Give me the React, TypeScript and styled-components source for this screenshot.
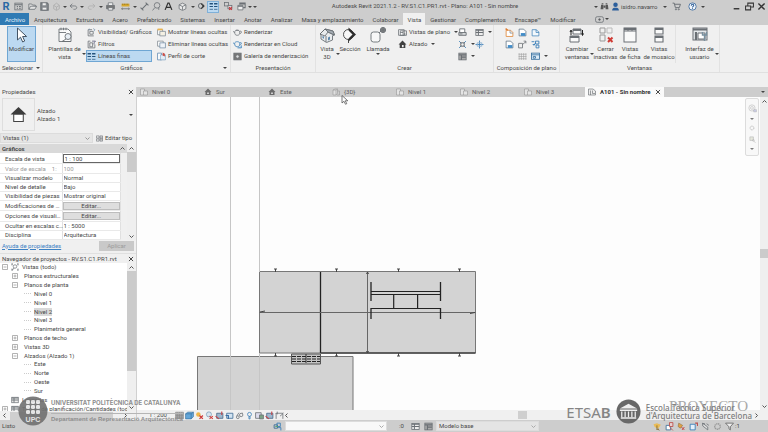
import React from "react";
import styled, { createGlobalStyle, css } from "styled-components";

const c = {
  ink: "#484848",
  bar: "#cdcdcd",
  panel: "#f0f0f0",
  blue: "#2f7ab4",
  pick: "#bcd9f1",
  pickLine: "#6fa6d3",
};

const Global = createGlobalStyle`
  * { box-sizing: border-box; }
  html, body, #root { height: 100%; }
  body { margin: 0; overflow: hidden; background: ${c.panel}; color: ${c.ink};
    font: 6px/8px Roboto, "Open Sans", sans-serif; }
  button, input, select { font: inherit; color: inherit; border: 0; padding: 0; margin: 0; background: none; border-radius: 0; appearance: none; outline: 0; }
  ul { list-style: none; margin: 0; padding: 0; }
`;

/* ---------- icons, drawn on a 16-unit grid ---------- */

const S = { fill: "none", stroke: "#6a6f74", strokeWidth: 1.4 } as const;
const B = { fill: "none", stroke: "#3c7fb8", strokeWidth: 1.6 } as const;

const icons: Record<string, React.ReactNode> = {
  window: <g {...S}><rect x="1.5" y="2" width="13" height="12" /><path d="M1.500 5h13M5 8h2M9 8h3M5 11h2M9 11h3" strokeWidth="1.800" /></g>,
  folder: <g {...S}><path d="M1.500 13V3.500h5l1.500 2h5V8M1.500 13l3-5.500h11l-3.500 5.500z" fill="#e3e3e3" /></g>,
  save: <g {...S} strokeWidth="2"><path d="M1.500 1.500h11l2 2v11h-13z" fill="#8b8f93" /><path d="M4 1.500h7v5H4zM4 14V9.500h8V14z" fill="#eee" strokeWidth="1" /></g>,
  sync: <g {...S} stroke="#aaa"><path d="M3 6l5-4 5 4v6l-5 3-5-3zM3 6l5 3 5-3M8 9v5" /></g>,
  undo: <g {...S}><path d="M6 3L2 7l4 4M2 7h8c5 0 5 6 0 6H8" /></g>,
  redo: <g {...S} stroke="#adadad"><path d="M10 3l4 4-4 4M14 7H6c-5 0-5 6 0 6h2" /></g>,
  print: <g {...S}><path d="M4 6V1.500h8V6" fill="#fff" /><path d="M1 6h14v6H1z" fill="#777" /><path d="M4 10h8v4.500H4z" fill="#eee" /></g>,
  measure: <g><path d="M1 3h14v5H1z" fill="#d8a92c" /><path d="M3 3v2M6 3v2M9 3v2M12 3v2" stroke="#6b5620" /><path d="M1 12h14M3 10.500L1 12l2 1.500M13 10.500l2 1.500-2 1.500" {...S} /></g>,
  dim: <g {...S} strokeWidth="1.800"><path d="M3 13L13 3M1 10l5 5M10 1l5 5" /></g>,
  cropSize: <g {...S}><path d="M2 14V4h12v10M2 4l-1 1M14 4l1-1M9 9l5-4M4 1v5" /></g>,
  tag: <g {...S}><circle cx="9" cy="6" r="5" /><path d="M5 10l-4 5M12 10v4" /></g>,
  letter: <path d="M2 14L7 2h2l5 12M4.500 9.500h7" fill="none" stroke="#333" strokeWidth="2.200" />,
  cube: <g {...S}><path d="M2 5l6-3 6 3v7l-6 3-6-3z" fill="#e8e8e8" /><path d="M2 5l6 3 6-3M8 8v6" /></g>,
  cubeTab: <g {...S} stroke="#999" strokeWidth="1.200"><path d="M2 4l4-2h5v9l-4 3H2zM2 4h6v10M8 4l3-2" fill="#e0e0e0" /><path d="M11 6h4v8h-5" /></g>,
  section: <g {...S} strokeWidth="1.700"><circle cx="7" cy="7" r="4.500" /><path d="M7 2l7 5-7 6V11l3-4-3-3z" fill="#333" stroke="none" /></g>,
  thin: <g stroke="#24527b"><path d="M1 3h6M9 3h6" strokeWidth="2.500" /><path d="M1 8h6M9 8h6" strokeWidth="2" /><path d="M1 13h6M9 13h6" strokeWidth="1.300" /></g>,
  closeViews: <g {...S}><rect x="1" y="1" width="7" height="6" /><rect x="7" y="6" width="7" height="6" fill="#ddd" /><path d="M9 9l5 5M14 9l-5 5" stroke="#c8373c" strokeWidth="2" /></g>,
  windows: <g {...S}><path d="M1.500 6h9v8h-9z" fill="#eee" /><path d="M1.500 7.500h9M5 5V2h9.500v8H11M5 3.500h9" strokeWidth="1.800" /></g>,
  binoc: <g fill="#555"><path d="M2 5h4v8H1zM10 5h4l1 8h-5zM6.500 6h3v4h-3zM3 2h3v2H3zM10 2h3v2h-3z" /></g>,
  user: <g fill="#2c5f9c"><circle cx="8" cy="5" r="4" /><path d="M2 15c0-4 2-5 6-5s6 1 6 5z" /></g>,
  cart: <g {...S} strokeWidth="1.700"><path d="M1 2h3l2 8h7l2-6H5" /><circle cx="7" cy="13" r="1" /><circle cx="12" cy="13" r="1" /></g>,
  help: <g><circle cx="8" cy="8" r="6.500" fill="#f1f6fb" stroke="#3e6b9c" strokeWidth="1.500" /><path d="M5.800 6.500c0-3.200 4.600-3 4.400-.3C10 8 8 8 8 9.800M8 11v2" fill="none" stroke="#2c5c96" strokeWidth="1.800" /></g>,
  min: <path d="M3 12h10" stroke="#333" strokeWidth="2.500" />,
  restore: <g fill="none" stroke="#333" strokeWidth="1.800"><path d="M1 7h9v7H1zM5 6V2h10v7h-4" /></g>,
  close: <path d="M2.500 2.500l11 11M13.500 2.500l-11 11" stroke="#333" strokeWidth="2.400" />,
  play: <g {...S}><rect x="1" y="3" width="14" height="10" rx="3" /><circle cx="8" cy="8" r="1.500" fill="#555" /></g>,
  arrow: <path d="M3.500 1v12l3-2.800 2.200 4.800 2-1-2.100-4.500h4z" fill="#fff" stroke="#456" strokeWidth="1" />,
  template: <g {...S} strokeWidth=".9"><path d="M2 2h9l3 3v9.500H2z" fill="#fafafa" /><path d="M4 .7v2.500M6.500.7v2.500M9 .7v2.500M2 5.500h7" /><circle cx="11" cy="9.500" r="3" fill="#e8eef4" /><path d="M9 12l-4 2.500h9" /></g>,
  visib: <g {...S}><path d="M2 3h7M2 3v11h10M5 6h6v5H5z" /><path d="M11 1l3 2-2 3M4 1v3" stroke="#7d98b0" /></g>,
  filter: <g {...S}><path d="M2 2v12h12V8M5 5h5v7H5zM2 2h4" /><path d="M9 2h6l-2.500 3v3" stroke="#557" /></g>,
  show: <g><path d="M1 3h9v9H1z" fill="#fff" stroke="#8b9298" strokeWidth="1.500" /><path d="M5 6h10v8H5z" fill="#f4f0e3" stroke="#7b8894" strokeWidth="1.300" /><path d="M1 1h9v3H1z" fill="#e9b24d" /></g>,
  hide: <g><path d="M1 2h10v9H1z" fill="#fff" stroke="#8b9298" strokeWidth="1.500" /><path d="M5 5h10v9H5z" fill="#eef3f8" stroke="#708ba3" strokeWidth="1.300" /></g>,
  cut: <g><path d="M1 2h7v12H1z" fill="#fff" stroke="#6890b6" strokeWidth="1.500" /><path d="M6 5h9v9H6z" fill="#e3edf6" stroke="#6890b6" /><path d="M10 1l4 2v5l-4-2z" fill="#cc4d45" /></g>,
  teapot: <g {...S} strokeWidth="1.300"><path d="M3 7c0-4 9-4 9 0s-1 6-4.500 6S3 11 3 7zM3 8L0 6M12 6c4-2 4 4 0 4M5 4h5" fill="#eee" /></g>,
  cloud: <g {...B} strokeWidth="1.400"><path d="M3 6c0-4 9-4 9 0s-1 6-4.500 6S3 10 3 6zM3 7L0 5M12 5c4-2 4 3 0 4" /><path d="M8 14h6a2 2 0 000-4" fill="#a9cce8" /></g>,
  gallery: <g {...S}><rect x="1.500" y="2" width="13" height="12" fill="#777" /><circle cx="8" cy="8" r="3" fill="#ddd" /></g>,
  house3d: <g {...S} strokeWidth=".9"><path d="M1 7l5-5 8 2 1.500 4-2 .7V13l-6 2.500L2 12V8z" fill="#e9ecee" /><path d="M6 2L1 7l5 2 3-4 6 3M7 9v6" /><path d="M6 2l8 2 1.500 4-6.500-3z" fill="#a5adb4" /><path d="M9 10.500v3l2-1v-3zM3.500 9v2l1.500.7V9.600z" fill="#5d88ad" stroke="none" /></g>,
  bigSection: <g><circle cx="6.500" cy="7.500" r="5" fill="#f8f8f8" stroke="#3e3e3e" strokeWidth=".9" /><path d="M6.500.5l7.500 7-7.500 7v-3l4-4-4-4z" fill="#2e2e2e" /><path d="M6.500 12v4" stroke="#333" strokeWidth=".9" /></g>,
  callout: <g {...S} strokeWidth=".9"><rect x="1" y="5" width="9" height="10" rx="2.500" fill="#f8f8f8" /><circle cx="13" cy="3" r="2.600" fill="#888" /><path d="M9 6l2-2M10.500 3h5M13 .5v5" /></g>,
  plan: <g {...S}><path d="M1 3h10v10H1z" fill="#fff" /><path d="M4 5h11v8H4zM4 8h5v5M9 5v3M12 9v4" /></g>,
  house: <path d="M8 1L1 8h2v6h10V8h2zM7 9h3v4H7z" fill="#404040" fillRule="evenodd" />,
  houseTab: <path d="M8 1L1 8h2v6h10V8h2zM6 9h4v3H6z" fill="#6a6a6a" fillRule="evenodd" />,
  draft: <g {...S} strokeWidth="1.600"><path d="M3 8V1.500h9V8" fill="#fff" /><path d="M1.500 8h13v5h-13z" fill="#d5d8da" /><path d="M3 10.500h5" /></g>,
  schedule: <g {...S}><rect x="1.500" y="2.500" width="13" height="11" fill="#eee" /><path d="M1.500 4h13M6 4v9M1.500 8h13" strokeWidth="1.800" /></g>,
  dup: <g {...B}><path d="M2 2l4 4M14 2l-4 4M2 14l4-4M14 14l-4-4" /><rect x="5" y="5" width="6" height="6" stroke="#666" /></g>,
  scope: <g {...B}><path d="M8 1v14M1 8h14" /><path d="M4 5h8v6H4z" stroke="#8eb3d2" /></g>,
  legend: <g {...S}><rect x="1.500" y="2" width="13" height="12" fill="#aaa" /><path d="M1.500 5h13M6 5v9M6 9h8" strokeWidth="2" /></g>,
  sheet: <g {...B} strokeWidth="1.500"><path d="M2 4h8l4 4v7H2z" fill="#fff" stroke="#e08a3c" /><path d="M9 4v5h5" stroke="#8a8f94" /><path d="M1 1l4 3" stroke="#dc7b31" strokeWidth="2.500" /></g>,
  sheetBlue: <g><path d="M2 2h8l4 4v8H2z" fill="#fff" stroke="#566b7e" strokeWidth="1.300" /><path d="M5 9h8v5H5z" fill="#438dc9" /></g>,
  sheetTop: <g {...B} strokeWidth="1.300"><path d="M2 3h7l5 4v7H2z" fill="#f3f8fc" /><path d="M9 3v5h5" /></g>,
  revision: <g {...S}><path d="M1 6h7v8H1zM8 8l6-5M10 2h4v4" /></g>,
  guide: <g {...B}><path d="M1 3h5M8 2h6v5H8zM3 8h4M9 9h5v5H9zM8 5l-3 5" /></g>,
  grid: <path d="M2 2v12M6 2v12M10 2v12M14 2v12M1 4h14M1 8h14M1 12h14" stroke="#999" fill="none" />,
  viewport: <g><rect x="1" y="2" width="14" height="11" fill="#dcebf7" stroke="#39719f" strokeWidth="1.500" /><path d="M1 5h14M4 8h4v3H4z" stroke="#39719f" strokeWidth="1.500" fill="none" /></g>,
  swap: <g {...S} strokeWidth="1"><path d="M4 2h8v5H4zM1 9h9v6H1z" fill="#fafafa" /><path d="M4 3h8M1 10h9" strokeWidth="2" /><path d="M13.500 3v5M12.500 6.500l1 2 1-2M2 8V4M1 5l1-2 1 2" stroke="#222" /></g>,
  inactive: <g {...S} strokeWidth="1" stroke="#999"><path d="M2 1h5v5H2zM2 8h5v6H2z" /><path d="M9 1h5v5H9z" stroke="#bbb" /><path d="M10 10.500l4.500 4.500M14.500 10.500L10 15" stroke="#cf3a34" strokeWidth="2" /></g>,
  tabView: <g {...S} strokeWidth="1"><rect x="2" y="1" width="12" height="14" fill="#fafafa" /><path d="M2 2h12" strokeWidth="2.200" /><path d="M6 1v3M10 1v3M2 4h12" /></g>,
  tile: <g {...S} strokeWidth="1.100"><path d="M4 1h8v6H4zM4 9h8v6H4z" fill="#fafafa" /><path d="M4 2h8M4 10h8" strokeWidth="2" /></g>,
  interface: <g {...S} strokeWidth="1"><rect x="1" y="1" width="14" height="12" fill="#e6eaed" /><path d="M1 2.500h14M4 5v8" strokeWidth="2.200" /><path d="M6 6h7v6H6z" fill="#fff" /><path d="M12.500 7v7M10.500 5v3h4V5" stroke="#78909f" strokeWidth="1.400" /></g>,
  doc: <g {...S} stroke="#8a8a8a" strokeWidth="1"><path d="M1 2h8v4h6v8H1z" fill="#e4e4e4" /><path d="M7 6v8M9 6H7" /></g>,
  sheetTab: <g {...S} strokeWidth="1.300"><path d="M1 2h9l5 4v8H1z" fill="#eee" /><path d="M5 5v9M9 5v6h5" /></g>,
  views: <g {...S}><path d="M2 5V1M2 11v4M14 5V1M14 11v4M1 2h3M12 2h3M1 14h3M12 14h3" /><circle cx="8" cy="7" r="3.500" /><path d="M6 10l-3 4" /></g>,
  editType: <g {...S}><path d="M1 2h6v5H1zM1 9h6v5H1zM9 2h6v12H9zM9 5h6M9 8h6M9 11h6" /></g>,
  fine: <path d="M1 2h14v12H1zM1 5h14M1 8h14M1 11h14M4 2v12M8 2v12M12 2v12" fill="#aaa" stroke="#888" />,
  solid: <g stroke="#2d6596"><path d="M1 5l4-3h10v8l-4 4H1z" fill="#63a6d9" /><path d="M1 5h10v9M11 5l4-3" fill="none" /></g>,
  sun: <g><circle cx="6" cy="6" r="4" fill="#eeb64a" /><path d="M8 8l6 6M14 8l-6 6" stroke="#cf3d3a" strokeWidth="2.200" /></g>,
  shadow: <g><circle cx="7" cy="6" r="4.500" fill="#d8e4ee" stroke="#5c86a8" /><path d="M8 9l6 5M14 9l-6 5" stroke="#cf3d3a" strokeWidth="1.800" /></g>,
  crop: <g><path d="M3 4h11v9H3z" fill="#9fb8cf" stroke="#4c6b89" strokeWidth="1.500" /><path d="M1 9l6 5M12 1v6" stroke="#c8484a" strokeWidth="2" /></g>,
  cropShow: <g><path d="M3 4h11v9H3z" fill="#d3e4f2" stroke="#47729a" strokeWidth="1.500" /><path d="M1 8h5v6" fill="none" stroke="#3a6ea5" strokeWidth="2" /></g>,
  glasses: <g {...S}><circle cx="5" cy="11" r="2.500" /><circle cx="11" cy="7" r="3" /><path d="M3 9l4-6M13 5V3" /></g>,
  bulb: <g {...B} strokeWidth="1.400"><circle cx="8" cy="6" r="3.500" /><path d="M7 10h2v4H7z" /></g>,
  reveal: <g {...S}><path d="M1 3h10v10H1z" fill="#dde" /><path d="M8 7h7v7H8z" fill="#7ba386" /></g>,
  select: <g {...B}><path d="M2 5h6v6H2z" stroke="#3d6d94" /><path d="M7 2h6v6H7zM9 10h5v5" /><path d="M4 8h5" stroke="#56a56a" /></g>,
  pickOrange: <g><path d="M1 4l6-2 7 3-5 7-6-3z" fill="#e9bb57" /><path d="M7 6v8l2-2 2 3" fill="none" stroke="#80642a" strokeWidth="1.500" /></g>,
  pickRed: <g><path d="M2 6h8v8H2z" fill="#fff" stroke="#44749c" strokeWidth="1.600" /><path d="M8 1h6v7H8zM9 10l5 5" fill="#e6d0d0" stroke="#bb4c48" strokeWidth="1.500" /></g>,
  pin: <g><path d="M3 2l7 4-4 5-4-3z" fill="#e0a144" stroke="#8b6b3a" /><path d="M8 9l5 5M13 9l-4 5" stroke="#c2403d" strokeWidth="1.700" /></g>,
  face: <g><path d="M2 4h9v10H2z" fill="#e4f0fa" stroke="#3c7fb8" strokeWidth="1.600" /><path d="M11 2h4v5" fill="none" stroke="#bb4c48" strokeWidth="1.800" /></g>,
  drag: <g {...S}><path d="M2 3h5M3 2v5l9 7v-5zM10 3l4 3" fill="#ddd" /></g>,
  gear: <g {...S} stroke="#999"><circle cx="8" cy="8" r="5" strokeWidth="2.500" strokeDasharray="2.400 1" /></g>,
  funnel: <path d="M1 2h14L9.500 8.500V14L7 12V8.500z" fill="#eee" stroke="#555" strokeWidth="1.300" />,
  wheel: <g {...S} stroke="#999" strokeWidth="1"><circle cx="7" cy="7" r="5.500" /><circle cx="7" cy="7" r="2.500" /><path d="M10 10h5v4h-5z" fill="#b5b9e0" /></g>,
  zoomer: <g {...S} stroke="#999"><path d="M2 2h8v8H2z" fill="#dde0d0" /><circle cx="10" cy="10" r="2" /><path d="M11 12l4 3" /></g>,
};

const IconSvg = styled.svg<{ $s: number }>`
  width: ${(p) => p.$s}px;
  height: ${(p) => p.$s}px;
  flex: none;
  display: block;
`;
const Icon = ({ n, s = 9 }: { n: string; s?: number }) => (
  <IconSvg $s={s} viewBox="0 0 16 16" aria-hidden="true">{icons[n]}</IconSvg>
);

const Caret = styled.i`
  flex: none;
  width: 0;
  height: 0;
  border: 2px solid transparent;
  border-top-color: #444;
  border-bottom-width: 0;
`;

const ChevronSvg = styled.svg`
  width: 5px;
  height: 5px;
  flex: none;
  display: block;
`;
const Chevron = ({ d = "down", ink = "#555" }: { d?: string; ink?: string }) => (
  <ChevronSvg viewBox="0 0 10 10" aria-hidden="true">
    <path
      d={{ down: "M1 3l4 4 4-4", up: "M1 7l4-4 4 4", left: "M7 1L3 5l4 4", right: "M3 1l4 4-4 4" }[d]}
      fill="none" stroke={ink} strokeWidth="2"
    />
  </ChevronSvg>
);

/* ---------- shell ---------- */

const Shell = styled.div`
  position: relative;
  display: flex;
  flex-direction: column;
  height: 100vh;
  min-height: 0;
`;

const TitleBar = styled.header`
  display: flex;
  align-items: center;
  height: 13px;
  flex: none;
  background: ${c.bar};
`;
const Tool = styled.button<{ $w: number; $on?: boolean }>`
  width: ${(p) => p.$w}px;
  height: 12px;
  flex: none;
  display: flex;
  align-items: center;
  justify-content: center;
  ${(p) => p.$on && css`background: ${c.pick}; box-shadow: inset 0 0 0 1px #7fb0d8;`}
`;
const Logo = styled.span`
  width: 12px;
  flex: none;
  text-align: center;
  font-size: 11px;
  line-height: 12px;
  font-weight: 700;
  color: #2a6aa5;
`;
const Gap = styled.span<{ $w: number }>`
  width: ${(p) => p.$w}px;
  flex: none;
`;
const DocTitle = styled.span`
  flex: 1;
  min-width: 0;
  height: 10px;
  text-align: center;
  white-space: nowrap;
`;
const UserName = styled.span`
  width: 40px;
  flex: none;
  white-space: nowrap;
`;

const RibbonTabs = styled.nav`
  display: flex;
  height: 12px;
  flex: none;
  background: ${c.bar};
`;
const RibbonTab = styled.button<{ $kind?: "file" | "on" }>`
  height: 12px;
  padding: 1px 4px 0 5px;
  white-space: nowrap;
  line-height: 10px;
  ${(p) => p.$kind === "file" && css`background: ${c.blue}; color: #e8f2fa;`}
  ${(p) => p.$kind === "on" && css`background: ${c.panel};`}
`;

const Ribbon = styled.section`
  display: flex;
  height: 48px;
  flex: none;
  background: ${c.panel};
  border-bottom: 1px solid #e0e0e0;
`;
const Group = styled.div<{ $w: number }>`
  width: ${(p) => p.$w}px;
  flex: none;
  display: flex;
  flex-direction: column;
  border-right: 1px solid #e2e2e2;
`;
const GroupBody = styled.div<{ $pad?: number }>`
  display: flex;
  height: 38px;
  padding-left: ${(p) => p.$pad ?? 0}px;
`;
const GroupTitle = styled.div`
  display: flex;
  align-items: center;
  justify-content: center;
  gap: 3px;
  height: 9px;
  white-space: nowrap;
`;
const Launcher = styled.button`
  margin-left: auto;
  margin-right: 3px;
  display: flex;
`;
const GroupName = styled.span`
  flex: 1;
  text-align: center;
`;
const Divider = styled.span`
  width: 1px;
  margin-right: 8px;
  background: #e2e2e2;
`;
const BigButton = styled.button<{ $w: number; $on?: boolean }>`
  width: ${(p) => p.$w}px;
  height: 36px;
  margin-top: 1px;
  flex: none;
  display: flex;
  flex-direction: column;
  align-items: center;
  padding-top: 1px;
  line-height: 8px;
  white-space: nowrap;
  ${(p) => p.$on && css`background: ${c.pick}; box-shadow: inset 0 0 0 1px ${c.pickLine};`}
`;
const BigLabel = styled.span`
  margin-top: 2px;
  white-space: pre;
  text-align: center;
`;
const CaretSlot = styled.span`
  display: flex;
  width: 4px;
  flex: none;
  padding-top: 28px;
`;
const Column = styled.div<{ $w: number }>`
  width: ${(p) => p.$w}px;
  flex: none;
  display: grid;
  grid-template-rows: repeat(3, 12px);
  padding-top: 1px;
`;
const SmallButton = styled.button<{ $on?: boolean }>`
  display: flex;
  align-items: center;
  gap: 2px;
  white-space: nowrap;
  padding-left: 1px;
  ${(p) => p.$on && css`background: ${c.pick}; box-shadow: inset 0 0 0 1px ${c.pickLine};`}
`;
const DropCaret = styled(Caret)`
  margin-left: 2px;
`;

/* ---------- work area ---------- */

const Work = styled.main`
  flex: 1;
  min-height: 0;
  display: flex;
  margin-top: 14px;
`;
const Side = styled.aside`
  width: 137px;
  flex: none;
  display: flex;
  flex-direction: column;
  border-right: 1px solid #d0d0d0;
  overflow: hidden;
`;
const PaneHead = styled.div`
  display: flex;
  align-items: center;
  justify-content: space-between;
  height: 10px;
  flex: none;
  padding: 0 2px;
  white-space: nowrap;
`;
const IconButton = styled.button`
  display: flex;
  flex: none;
`;
const TypePicker = styled.button`
  display: flex;
  align-items: center;
  height: 35px;
  flex: none;
  gap: 2px;
  text-align: left;
  padding: 0 3px 0 2px;
`;
const TypeThumb = styled.span`
  width: 33px;
  height: 33px;
  display: flex;
  align-items: center;
  justify-content: center;
  border: 1px solid #dedede;
`;
const TypeName = styled.span`
  flex: 1;
  white-space: pre;
`;
const InstanceRow = styled.div`
  display: flex;
  align-items: center;
  height: 12px;
  flex: none;
  gap: 3px;
`;
const Combo = styled.label<{ $w: number; $bg: string }>`
  width: ${(p) => p.$w}px;
  height: 10px;
  flex: none;
  display: flex;
  align-items: center;
  padding: 0 2px;
  background: ${(p) => p.$bg};
  border: 1px solid #dcdcdc;
`;
const ComboSelect = styled.select`
  flex: 1;
  min-width: 0;
  height: 8px;
  line-height: 8px;
`;
const EditType = styled.button`
  display: flex;
  align-items: center;
  gap: 2px;
  white-space: nowrap;
`;
const PropsBody = styled.div`
  display: flex;
  height: 96px;
  flex: none;
`;
const PropsMain = styled.div`
  flex: 1;
  min-width: 0;
`;
const Category = styled.div`
  display: flex;
  align-items: center;
  justify-content: space-between;
  height: 9px;
  padding: 0 2px;
  background: #d9d9d9;
`;
const PropTable = styled.table`
  width: 121px;
  height: 87px;
  table-layout: fixed;
  border-collapse: collapse;
  background: #fff;
  th, td { padding: 0; border: 0; border-right: 1px solid #e0e0e0; border-bottom: 1px solid #e9e9e9; line-height: 7px; }
  th { width: 62px; padding-left: 5px; font-weight: 400; text-align: left; white-space: nowrap; }
`;
const PropInput = styled.input<{ $focus?: boolean; $dim?: boolean }>`
  display: block;
  width: 100%;
  height: ${(p) => (p.$focus ? 9 : 7)}px;
  padding-left: 1px;
  ${(p) => p.$dim && css`color: #999;`}
  ${(p) => p.$focus && css`box-shadow: inset 0 0 0 1px #666; padding-left: 2px;`}
`;
const PropLabel = styled.label<{ $dim?: boolean }>`
  white-space: pre;
  ${(p) => p.$dim && css`color: #999;`}
`;
const PropButton = styled.button`
  display: block;
  width: 100%;
  height: 8px;
  line-height: 7px;
  background: #dedede;
  box-shadow: inset 0 0 0 1px #bdbdbd;
`;
const VScroll = styled.div<{ $w: number }>`
  width: ${(p) => p.$w}px;
  flex: none;
  display: flex;
  flex-direction: column;
  align-items: center;
  background: #efefef;
`;
const VThumb = styled.span<{ $h: number; $top?: number }>`
  width: 100%;
  height: ${(p) => p.$h}px;
  margin-top: ${(p) => p.$top ?? 0}px;
  background: #cbcbcb;
`;
const ScrollBtn = styled.button`
  width: 100%;
  height: 8px;
  flex: none;
  display: flex;
  align-items: center;
  justify-content: center;
`;
const Spring = styled.span`
  flex: 1;
`;
const HelpRow = styled.div`
  display: flex;
  align-items: center;
  justify-content: space-between;
  height: 11px;
  flex: none;
  padding: 0 2px;
`;
const HelpLink = styled.a`
  color: #3c81c4;
`;
const Apply = styled.button`
  width: 35px;
  height: 10px;
  background: #c9c9c9;
  color: #9b9b9b;
`;
const BrowserHead = styled(PaneHead)`
  margin-top: 2px;
  border-top: 1px solid #e0e0e0;
`;
const BrowserBody = styled.div`
  flex: 1;
  min-height: 0;
  display: flex;
  background: #fff;
  overflow: hidden;
`;
const Tree = styled.ul`
  flex: 1;
  min-width: 0;
  height: 150px;
  display: grid;
  grid-auto-rows: 1fr;
`;
const TreeItem = styled.li<{ $level: number }>`
  display: flex;
  align-items: center;
  gap: 3px;
  min-height: 0;
  white-space: nowrap;
  padding-left: ${(p) => [2, 12, 24][p.$level]}px;
`;
const Expander = styled.button`
  width: 6px;
  height: 6px;
  flex: none;
  display: flex;
`;
const Dash = styled.span<{ $w: number }>`
  width: ${(p) => p.$w}px;
  flex: none;
  border-top: 1px dotted #ccc;
`;
const Node = styled.button<{ $on?: boolean }>`
  height: 8px;
  line-height: 8px;
  ${(p) => p.$on && css`background: #d9d9d9;`}
`;
const HScroll = styled.div`
  display: flex;
  align-items: center;
  flex: 1;
  min-width: 0;
  background: #f0f0f0;
`;
const BrowserFoot = styled.div`
  display: flex;
  height: 9px;
  flex: none;
  padding: 1px 8px 1px 2px;
`;
const HThumb = styled.span<{ $w: number; $left: number }>`
  width: ${(p) => p.$w}px;
  height: 8px;
  margin-left: ${(p) => p.$left}px;
  background: #cfcfcf;
`;

const Center = styled.section`
  flex: 1;
  min-width: 0;
  display: flex;
  flex-direction: column;
`;
const DocTabs = styled.nav`
  display: flex;
  height: 10px;
  flex: none;
  background: ${c.bar};
`;
const DocTab = styled.button<{ $on?: boolean }>`
  width: ${(p) => (p.$on ? 79 : 64)}px;
  flex: none;
  display: flex;
  align-items: center;
  gap: 4px;
  padding-left: 3px;
  white-space: nowrap;
  color: #606060;
  ${(p) => p.$on && css`background: #fafafa; color: #333; font-weight: 700;`}
`;
const TabMenu = styled.button`
  margin-left: auto;
  width: 10px;
  display: flex;
  align-items: center;
  justify-content: center;
`;
const CanvasRow = styled.div`
  flex: 1;
  min-height: 0;
  display: flex;
  background: #fdfdfd;
`;
const Canvas = styled.div`
  flex: 1;
  min-width: 0;
  position: relative;
`;
const Drawing = styled.svg`
  display: block;
  width: 100%;
  height: 100%;
`;
const NavBar = styled.div`
  position: absolute;
  top: 1px;
  right: 1px;
  width: 14px;
  height: 58px;
  border: 1px solid #cfcfcf;
  border-radius: 2px;
  background: #f6f6f6;
  display: flex;
  flex-direction: column;
  align-items: center;
  justify-content: space-evenly;
  opacity: 0.7;
`;
const ViewBar = styled.div`
  height: 10px;
  flex: none;
  display: flex;
  align-items: center;
  background: #f0f0f0;
`;
const Scale = styled.button`
  width: 37px;
  height: 9px;
  line-height: 7px;
  flex: none;
  padding: 0 0 2px 12px;
  text-align: left;
`;
const StatusBar = styled.footer`
  display: flex;
  align-items: center;
  height: 12px;
  flex: none;
  background: ${c.bar};
  padding-left: 2px;
`;
const StatusText = styled.span<{ $w: number }>`
  width: ${(p) => p.$w}px;
  flex: none;
`;

/* ---------- overlays ---------- */

const Pointer = styled.svg`
  position: absolute;
  left: 341px;
  top: 95px;
  width: 8px;
  height: 10px;
`;
const UpcMark = styled.div`
  position: absolute;
  left: 18px;
  bottom: 6px;
  display: flex;
  align-items: center;
  gap: 3px;
  color: #8d8d8d;
  font-weight: 700;
  white-space: nowrap;
`;
const UpcSeal = styled.svg`
  width: 30px;
  height: 30px;
  opacity: 0.9;
`;
const UpcLines = styled.div`
  display: flex;
  flex-direction: column;
`;
const UpcTop = styled.span`
  font: 700 6px/11px Inter, sans-serif;
  padding-bottom: 5px;
  border-bottom: 1px solid #b5b5b5;
`;
const UpcBottom = styled.span`
  font: 700 6px/11px "Liberation Sans", sans-serif;
`;
const EtsabMark = styled.div`
  position: absolute;
  right: 16px;
  bottom: 8px;
  display: flex;
  align-items: center;
  gap: 5px;
  color: #7d7d7d;
  white-space: nowrap;
`;
const EtsabName = styled.span`
  font: 15px/20px "Noto Sans", sans-serif;
  color: #858585;
  b { font-weight: 600; }
`;
const EtsabSeal = styled.svg`
  width: 25px;
  height: 25px;
`;
const EtsabText = styled.span`
  font: 500 8px/8px "Noto Sans", sans-serif;
  white-space: pre;
`;
const ProjectMark = styled.span`
  position: absolute;
  right: 20px;
  bottom: 18px;
  font: 15px/16px "Liberation Serif", serif;
  color: #a8a8a8;
`;

/* ---------- data ---------- */

type ToolDef = [string, number, boolean?];

const quick: ToolDef[] = [
  ["window", 13], ["", 1], ["folder", 12], ["save", 12], ["sync", 12], ["caret", 6], ["undo", 11], ["caret", 6],
  ["redo", 12], ["caret", 7], ["print", 12], ["", 2], ["measure", 14], ["caret", 6], ["dim", 12], ["tag", 12],
  ["letter", 12], ["", 2], ["cube", 13], ["caret", 7], ["section", 11], ["thin", 12, true], ["", 3],
  ["closeViews", 13], ["windows", 12], ["caret", 5], ["caret", 6],
];
const session: ToolDef[] = [["caret", 7], ["binoc", 11], ["user", 11]];
const windowTools: ToolDef[] = [["caret", 8], ["cart", 14], ["", 3], ["help", 13], ["caret", 7], ["", 23], ["min", 14], ["restore", 12], ["close", 13]];
const viewTools: ToolDef[] = ["fine", "solid", "sun", "shadow", "crop", "cropShow", "glasses", "bulb", "reveal", "crop", "cropSize"].map((n) => [n, 10]);
const selectTools: ToolDef[] = ["pickOrange", "pickRed", "pin", "face", "drag", "gear", "funnel"].map((n) => [n, 12]);

const ribbonTabs = ["Archivo", "Arquitectura", "Estructura", "Acero", "Prefabricado", "Sistemas", "Insertar", "Anotar",
  "Analizar", "Masa y emplazamiento", "Colaborar", "Vista", "Gestionar", "Complementos", "Enscape™", "Modificar"];

const props: { name: string; value: string; kind?: "button" | "focus" | "dim" }[] = [
  { name: "Escala de vista", value: "1 : 100", kind: "focus" },
  { name: "Valor de escala    1:", value: "100", kind: "dim" },
  { name: "Visualizar modelo", value: "Normal" },
  { name: "Nivel de detalle", value: "Bajo" },
  { name: "Visibilidad de piezas", value: "Mostrar original" },
  { name: "Modificaciones de …", value: "Editar...", kind: "button" },
  { name: "Opciones de visuali…", value: "Editar...", kind: "button" },
  { name: "Ocultar en escalas c…", value: "1 : 5000" },
  { name: "Disciplina", value: "Arquitectura" },
];

const tree: { t: string; l: 0 | 1 | 2; e?: "+" | "-"; icon?: string; on?: boolean }[] = [
  { t: "Vistas (todo)", l: 0, e: "-", icon: "views" },
  { t: "Planos estructurales", l: 1, e: "+" },
  { t: "Planos de planta", l: 1, e: "-" },
  { t: "Nivel 0", l: 2 },
  { t: "Nivel 1", l: 2 },
  { t: "Nivel 2", l: 2, on: true },
  { t: "Nivel 3", l: 2 },
  { t: "Planimetría general", l: 2 },
  { t: "Planos de techo", l: 1, e: "+" },
  { t: "Vistas 3D", l: 1, e: "+" },
  { t: "Alzados (Alzado 1)", l: 1, e: "-" },
  { t: "Este", l: 2 },
  { t: "Norte", l: 2 },
  { t: "Oeste", l: 2 },
  { t: "Sur", l: 2 },
  { t: "Leyendas", l: 0, icon: "schedule" },
  { t: "Tablas de planificación/Cantidades (tod", l: 0, e: "+", icon: "schedule" },
];

const docTabs = [["doc", "Nivel 0"], ["houseTab", "Sur"], ["houseTab", "Este"], ["cubeTab", "{3D}"], ["doc", "Nivel 1"], ["doc", "Nivel 2"], ["doc", "Nivel 3"]];

const Tools = ({ list }: { list: ToolDef[] }) => (
  <>
    {list.map(([n, w, on], i) =>
      n === "" ? <Gap key={i} $w={w} /> : (
        <Tool key={i} $w={w} $on={on} aria-label={n}>{n === "caret" ? <Caret /> : <Icon n={n} />}</Tool>
      ))}
  </>
);

const Big = ({ n, w, text, on, caret }: { n: string; w: number; text: string; on?: boolean; caret?: boolean }) => (
  <BigButton $w={w} $on={on}>
    <Icon n={n} s={16} />
    <BigLabel>{text}</BigLabel>
    {caret && <Caret />}
  </BigButton>
);

const Small = ({ n, text, on, caret }: { n: string; text?: string; on?: boolean; caret?: boolean }) => (
  <SmallButton $on={on} aria-label={text ?? n}>
    <Icon n={n} />
    {text}
    {caret && <DropCaret />}
  </SmallButton>
);

const grips = [275, 336, 398, 459];

export default function App() {
  return (
    <Shell>
      <Global />
      <TitleBar>
        <Logo>R</Logo>
        <Tools list={quick} />
        <DocTitle>Autodesk Revit 2021.1.2 - RV.S1.C1.PR1.rvt - Plano: A101 - Sin nombre</DocTitle>
        <Tools list={session} />
        <UserName>isidro.navarro</UserName>
        <Tools list={windowTools} />
      </TitleBar>

      <RibbonTabs>
        {ribbonTabs.map((t) => (
          <RibbonTab key={t} $kind={t === "Archivo" ? "file" : t === "Vista" ? "on" : undefined}>{t}</RibbonTab>
        ))}
        <Gap $w={14} />
        <Tool $w={11} aria-label="Panel"><Icon n="play" /></Tool>
        <Tool $w={5} aria-label="Más"><Caret /></Tool>
      </RibbonTabs>

      <Ribbon>
        <Group $w={43}>
          <GroupBody $pad={7}><Big n="arrow" w={29} text="Modificar" on /></GroupBody>
          <GroupTitle>Seleccionar <Caret /></GroupTitle>
        </Group>
        <Group $w={188}>
          <GroupBody $pad={4}>
            <Big n="template" w={35} text={"Plantillas de\nvista"} />
            <CaretSlot><Caret /></CaretSlot>
            <Column $w={46}>
              <Small n="visib" text="Visibilidad/ Gráficos" />
              <Small n="filter" text="Filtros" />
              <Small n="thin" text="Líneas finas" on />
            </Column>
            <Gap $w={24} />
            <Column $w={72}>
              <Small n="show" text="Mostrar líneas ocultas" />
              <Small n="hide" text="Eliminar líneas ocultas" />
              <Small n="cut" text="Perfil de corte" />
            </Column>
          </GroupBody>
          <GroupTitle><GroupName>Gráficos</GroupName><Launcher aria-label="Opciones"><Caret /></Launcher></GroupTitle>
        </Group>
        <Group $w={85}>
          <GroupBody $pad={1}>
            <Column $w={82}>
              <Small n="teapot" text="Renderizar" />
              <Small n="cloud" text="Renderizar  en Cloud" />
              <Small n="gallery" text="Galería de  renderización" />
            </Column>
          </GroupBody>
          <GroupTitle>Presentación</GroupTitle>
        </Group>
        <Group $w={178}>
          <GroupBody $pad={2}>
            <Big n="house3d" w={18} text={"Vista\n3D"} />
            <CaretSlot><Caret /></CaretSlot>
            <Big n="bigSection" w={20} text="Sección" />
            <Gap $w={4} />
            <Big n="callout" w={28} text="Llamada" caret />
            <Gap $w={5} />
            <Column $w={60}>
              <Small n="plan" text="Vistas de plano" caret />
              <Small n="house" text="Alzado" caret />
            </Column>
            <Column $w={17}><Small n="draft" /><Small n="dup" caret /><Small n="legend" caret /></Column>
            <Column $w={17}><Small n="schedule" caret /><Small n="scope" /></Column>
          </GroupBody>
          <GroupTitle>Crear</GroupTitle>
        </Group>
        <Group $w={66}>
          <GroupBody $pad={10}>
            <Column $w={13}><Small n="sheet" /><Small n="sheetBlue" /></Column>
            <Column $w={13}><Small n="sheetBlue" /><Small n="revision" /><Small n="grid" /></Column>
            <Column $w={17}><Small n="sheetTop" /><Small n="guide" /><Small n="viewport" caret /></Column>
          </GroupBody>
          <GroupTitle>Composición de plano</GroupTitle>
        </Group>
        <Group $w={160}>
          <GroupBody $pad={4}>
            <Big n="swap" w={26} text={"Cambiar\nventanas"} />
            <CaretSlot><Caret /></CaretSlot>
            <Big n="inactive" w={23} text={"Cerrar\ninactivas"} />
            <Big n="tabView" w={26} text={"Vistas\nde ficha"} />
            <Big n="tile" w={32} text={"Vistas\nde mosaico"} />
            <Divider />
            <Big n="interface" w={31} text={"Interfaz de\nusuario"} />
            <CaretSlot><Caret /></CaretSlot>
          </GroupBody>
          <GroupTitle>Ventanas</GroupTitle>
        </Group>
      </Ribbon>

      <Work>
        <Side>
          <PaneHead>Propiedades<IconButton aria-label="Cerrar"><Icon n="close" s={6} /></IconButton></PaneHead>
          <TypePicker>
            <TypeThumb>
              <IconSvg $s={17} viewBox="0 0 16 16" aria-hidden="true">
                <path d="M3.500 7.500h9v7h-9z" fill="#fff" stroke="#444" /><path d="M8 1L.5 8h15z" fill="#3c3c3c" />
              </IconSvg>
            </TypeThumb>
            <TypeName>{"Alzado\nAlzado 1"}</TypeName>
            <Caret />
          </TypePicker>
          <InstanceRow>
            <Combo $w={93} $bg="#e6e6e6">
              <ComboSelect aria-label="Filtro de vistas"><option>Vistas (1)</option></ComboSelect>
              <Chevron ink="#999" />
            </Combo>
            <EditType><Icon n="editType" s={7} />Editar tipo</EditType>
          </InstanceRow>
          <PropsBody>
            <PropsMain>
              <Category><b>Gráficos</b><Chevron d="up" /></Category>
              <PropTable>
                <tbody>
                  {props.map((p, i) => (
                    <tr key={p.name}>
                      <th scope="row"><PropLabel htmlFor={`p${i}`} $dim={p.kind === "dim"}>{p.name}</PropLabel></th>
                      <td>
                        {p.kind === "button"
                          ? <PropButton id={`p${i}`}>{p.value}</PropButton>
                          : <PropInput id={`p${i}`} defaultValue={p.value} $focus={p.kind === "focus"} $dim={p.kind === "dim"} />}
                      </td>
                    </tr>
                  ))}
                </tbody>
              </PropTable>
            </PropsMain>
            <VScroll $w={9}>
              <ScrollBtn aria-label="Subir"><Chevron d="up" /></ScrollBtn>
              <VThumb $h={20} />
              <Spring />
              <ScrollBtn aria-label="Bajar"><Chevron /></ScrollBtn>
            </VScroll>
          </PropsBody>
          <HelpRow><HelpLink href="#ayuda">Ayuda de propiedades</HelpLink><Apply>Aplicar</Apply></HelpRow>

          <BrowserHead>Navegador de proyectos - RV.S1.C1.PR1.rvt<IconButton aria-label="Cerrar"><Icon n="close" s={6} /></IconButton></BrowserHead>
          <BrowserBody>
            <Tree>
              {tree.map((n) => (
                <TreeItem key={n.t} $level={n.l}>
                  {n.e ? (
                    <Expander aria-label={n.e === "+" ? "Expandir" : "Contraer"}>
                      <IconSvg $s={6} viewBox="0 0 12 12" aria-hidden="true">
                        <path d={n.e === "+" ? "M1 1h10v10H1zM3 6h6M6 3v6" : "M1 1h10v10H1zM3 6h6"} fill="#fff" stroke="#999" strokeWidth="1.500" />
                      </IconSvg>
                    </Expander>
                  ) : n.l === 0 && <Gap $w={6} />}
                  {n.icon ? <Icon n={n.icon} s={8} /> : n.l === 1 ? <Gap $w={0} /> : <Dash $w={7} />}
                  <Node $on={n.on}>{n.t}</Node>
                </TreeItem>
              ))}
            </Tree>
            <VScroll $w={9}>
              <ScrollBtn aria-label="Subir"><Chevron d="up" /></ScrollBtn>
              <VThumb $h={100} />
              <Spring />
              <ScrollBtn aria-label="Bajar"><Chevron /></ScrollBtn>
            </VScroll>
          </BrowserBody>
          <BrowserFoot>
            <HScroll><Chevron d="left" /><HThumb $w={103} $left={3} /><Spring /><Chevron d="right" /></HScroll>
          </BrowserFoot>
        </Side>

        <Center>
          <DocTabs>
            {docTabs.map(([n, t]) => <DocTab key={t}><Icon n={n} s={8} />{t}</DocTab>)}
            <DocTab $on><Icon n="sheetTab" s={8} />A101 - Sin nombre<Icon n="close" s={6} /></DocTab>
            <TabMenu aria-label="Lista de vistas"><Caret /></TabMenu>
          </DocTabs>
          <CanvasRow>
            <Canvas>
              <Drawing role="img" aria-label="Plano A101">
                <g transform="translate(-137 -97)" fill="none" stroke="#444" strokeWidth="1">
                  <path d="M259.500 271.500h216v81.500h-216zM197.500 356.500h155.500v80h-155.500z" fill="#d3d3d3" stroke="#777" />
                  <path d="M230.500 97v330M259.500 97v175M259.500 353v80" stroke="#c6c6c6" />
                  <path d="M320.500 272v81" stroke="#222" strokeWidth="1.300" />
                  <path d="M367.500 272v81M259.500 312.500h216" stroke="#666" />
                  <path d="M320.500 353h155" stroke="#444" strokeWidth="1.500" />
                  <path d="M371 282v19M440.500 282v19M371 308v11M440.500 308v11" stroke="#222" strokeWidth="1.300" />
                  <path d="M371 291.500h69M371 294.500h69M371 308.500h69M393.700 294.500v14M417.600 294.500v14" stroke="#222" strokeWidth="1.200" />
                  <path d="M260 312l5-1M470 313.500l5-1M366.500 274l1-2 1 2M366.500 351l1 2 1-2" />
                  <path d="M291.500 354h29v10h-29z" fill="#c4c4c4" stroke="#555" />
                  <path d="M292 356.500h28M292 359h28M292 361.500h28" stroke="#222" strokeDasharray="4 1" />
                  <path d="M306 354v9" stroke="#333" />
                  {grips.map((x) => <path key={x} d={`M${x - 1} 269h3M${x + 0.5} 269v3M${x - 1} 356h3M${x + 0.5} 353v3`} stroke="#444" />)}
                </g>
              </Drawing>
              <NavBar>
                <Icon n="wheel" />
                <Caret />
                <Icon n="gear" s={6} />
                <Icon n="zoomer" s={7} />
                <Caret />
              </NavBar>
            </Canvas>
            <VScroll $w={8}>
              <ScrollBtn aria-label="Subir"><Chevron d="up" /></ScrollBtn>
              <VThumb $h={9} $top={144} />
              <Spring />
              <ScrollBtn aria-label="Bajar"><Chevron /></ScrollBtn>
            </VScroll>
          </CanvasRow>
          <ViewBar>
            <Scale>1 : 200</Scale>
            <Tools list={viewTools} />
            <HScroll><Chevron d="left" /><HThumb $w={9} $left={229} /><Spring /><Chevron d="right" /><Gap $w={9} /></HScroll>
          </ViewBar>
        </Center>
      </Work>

      <StatusBar>
        <StatusText $w={269}>Listo</StatusText>
        <Tools list={[["select", 12], ["", 2]]} />
        <Combo $w={102} $bg="#f8f8f8">
          <ComboSelect aria-label="Subproyecto"><option></option></ComboSelect>
          <Chevron ink="#aaa" />
        </Combo>
        <Gap $w={12} />
        <StatusText $w={10}>:0</StatusText>
        <Tools list={[["schedule", 12], ["legend", 15]]} />
        <Combo $w={103} $bg="#e4e4e4">
          <ComboSelect aria-label="Opción de diseño"><option>Modelo base</option></ComboSelect>
          <Chevron ink="#aaa" />
        </Combo>
        <Spring />
        <Tools list={selectTools} />
        <StatusText $w={33}>:1</StatusText>
      </StatusBar>

      <Pointer viewBox="0 0 16 20" aria-hidden="true"><path d="M2 1v15l4-3.500 3 6 2.500-1.200-3-5.800h5z" fill="#fff" stroke="#444" strokeWidth="1.400" /></Pointer>

      <UpcMark>
        <UpcSeal viewBox="0 0 30 30" aria-hidden="true">
          <circle cx="15" cy="15" r="14.500" fill="#707070" />
          <g fill="#e6e6e6">
            {[0, 1, 2].map((r) => [0, 1, 2].map((k) => <rect key={`${r}${k}`} x={8 + k * 5} y={4 + r * 5} width="4" height="4" rx="1.200" />))}
          </g>
          <text x="15" y="26" textAnchor="middle" fontSize="7" fontWeight="700" fill="#e6e6e6" fontFamily="Liberation Sans">UPC</text>
        </UpcSeal>
        <UpcLines>
          <UpcTop>UNIVERSITAT POLITÈCNICA DE CATALUNYA</UpcTop>
          <UpcBottom>Departament de Representació Arquitectònica</UpcBottom>
        </UpcLines>
      </UpcMark>

      <ProjectMark>PROYECTO</ProjectMark>
      <EtsabMark>
        <EtsabName>ETSA<b>B</b></EtsabName>
        <EtsabSeal viewBox="0 0 26 26" aria-hidden="true">
          <circle cx="13" cy="13" r="12.500" fill="#686868" />
          <path d="M13 5l9 5H4zM4 11h18v1.500H4zM5 19h16v1.500H5z" fill="#eee" />
          <path d="M6 13v6M9.500 13v6M13 13v6M16.500 13v6M20 13v6" stroke="#eee" strokeWidth="1.300" />
        </EtsabSeal>
        <EtsabText>{"Escola Tècnica Superior\nd'Arquitectura de Barcelona"}</EtsabText>
      </EtsabMark>
    </Shell>
  );
}
